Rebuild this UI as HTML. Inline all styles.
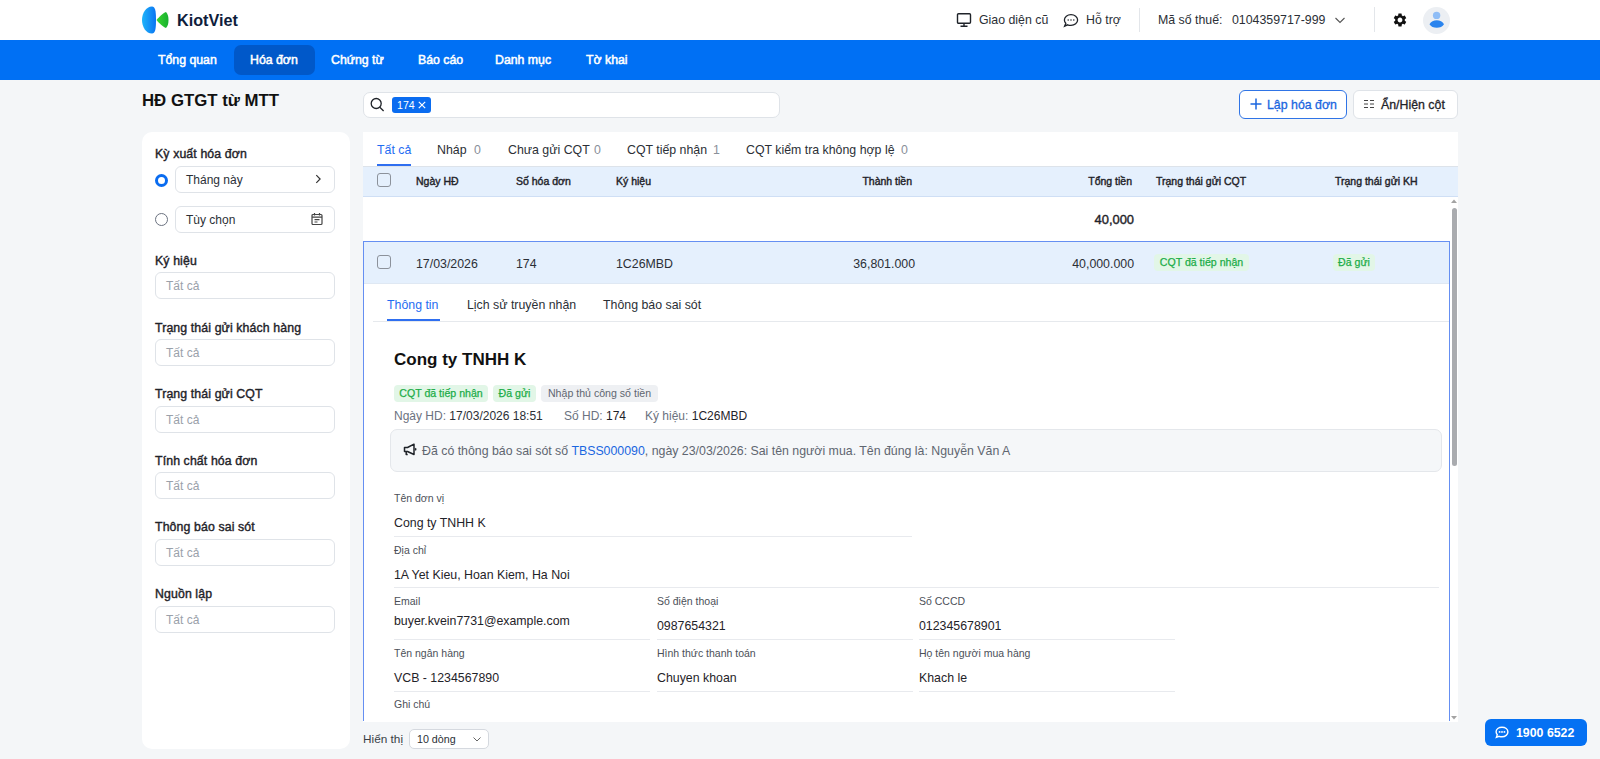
<!DOCTYPE html>
<html><head><meta charset="utf-8">
<style>
*{box-sizing:border-box;margin:0;padding:0}
html,body{width:1600px;height:759px;overflow:hidden;background:#f4f6f8;font-family:"Liberation Sans",sans-serif;color:#1f2329;position:relative}
.abs{position:absolute}
.t{position:absolute;white-space:nowrap;line-height:1}
/* header */
#hdr{position:absolute;left:0;top:0;width:1600px;height:40px;background:#fff}
#nav{position:absolute;left:0;top:40px;width:1600px;height:40px;background:#0070f4}
.navi{position:absolute;top:5px;height:30px;line-height:30px;color:#fff;font-weight:bold;font-size:12.35px;text-align:center;border-radius:7px}
.card{position:absolute;background:#fff;border-radius:10px}
.lbl{position:absolute;font-size:12.3px;font-weight:normal;-webkit-text-stroke:0.4px currentColor;letter-spacing:0.12px;color:#1f2329;white-space:nowrap;line-height:1}
.inp{position:absolute;border:1px solid #dfe3e8;border-radius:6px;background:#fff;height:26.5px}
.ph{position:absolute;left:10px;top:6px;font-size:12px;color:#9aa1aa;line-height:14px;white-space:nowrap}
.th{font-size:10.5px;font-weight:normal;color:#1f2329;-webkit-text-stroke:0.4px currentColor}
.td{font-size:12.35px;color:#2b2f36}
.badge{height:17px;line-height:17px;font-size:10.6px;-webkit-text-stroke:0.25px currentColor;text-align:center;border-radius:4px;white-space:nowrap}
.g{background:#e2f6e7;color:#1cad48}
.gr{background:#eef0f3;color:#5f6670;-webkit-text-stroke:0}
.fl{font-size:10.5px;color:#4b5058}
.fv{font-size:12.35px;color:#1f2329}
.navt{top:14px;font-size:12.3px;font-weight:normal;color:#fff;-webkit-text-stroke:0.5px #fff}
.med{-webkit-text-stroke:0.3px currentColor}
</style></head>
<body>
<div id="hdr">
  <!-- logo -->
  <svg class="abs" style="left:141px;top:5px" width="30" height="30" viewBox="0 0 30 30">
    <defs>
      <linearGradient id="gb" x1="0" y1="0" x2="1" y2="0"><stop offset="0" stop-color="#1fb4fa"/><stop offset="1" stop-color="#0a74f2"/></linearGradient>
      <linearGradient id="gg" x1="0" y1="0" x2="1" y2="0"><stop offset="0" stop-color="#3ad62e"/><stop offset="1" stop-color="#18b030"/></linearGradient>
    </defs>
    <path d="M11 1.5 C5 1.5 1 8 1 15 C1 22 5 28.5 11 28.5 C14 28.5 15 25 15 15 C15 5 14 1.5 11 1.5Z" fill="url(#gb)"/>
    <path d="M25 7 C22 8 18 12 15.5 15 C18 18 22 22 25 23 C27 21 27.5 18 27.5 15 C27.5 12 27 9 25 7Z" fill="url(#gg)"/>
  </svg>
  <div class="t" style="left:177px;top:12px;font-size:16.2px;font-weight:bold;color:#0e1d3c">KiotViet</div>
  <!-- monitor icon -->
  <svg class="abs" style="left:956px;top:12px" width="16" height="16" viewBox="0 0 16 16" fill="none" stroke="#1f2329" stroke-width="1.4">
    <rect x="1.5" y="1.8" width="13" height="9.5" rx="1"/>
    <path d="M8 11.5V14M4.5 14.3H11.5"/>
  </svg>
  <div class="t" style="left:979px;top:14px;font-size:12.35px;color:#2b2f36">Giao diện cũ</div>
  <svg class="abs" style="left:1063px;top:12px" width="16" height="16" viewBox="0 -0.6 16 16" fill="none" stroke="#1f2329" stroke-width="1.3">
    <path d="M8 2.1C4.3 2.1 1.4 4.4 1.4 7.4c0 1.3.5 2.4 1.4 3.3L1.6 13.6l3-1.4c1 .4 2.2.6 3.4.6 3.7 0 6.6-2.4 6.6-5.4S11.7 2.1 8 2.1z"/>
    <circle cx="5.2" cy="7.4" r=".75" fill="#1f2329" stroke="none"/><circle cx="8" cy="7.4" r=".75" fill="#1f2329" stroke="none"/><circle cx="10.8" cy="7.4" r=".75" fill="#1f2329" stroke="none"/>
  </svg>
  <div class="t" style="left:1086px;top:14px;font-size:12.35px;color:#2b2f36">Hỗ trợ</div>
  <div class="abs" style="left:1139px;top:8px;width:1px;height:24px;background:#e3e6ea"></div>
  <div class="t" style="left:1158px;top:14px;font-size:12.35px;color:#2b2f36">Mã số thuế:</div>
  <div class="t" style="left:1232px;top:14px;font-size:12.35px;color:#2b2f36">0104359717-999</div>
  <svg class="abs" style="left:1334px;top:14px" width="12" height="12" viewBox="0 0 12 12" fill="none" stroke="#555" stroke-width="1.1"><path d="M1.5 4l4.5 4.5L10.5 4"/></svg>
  <div class="abs" style="left:1374px;top:7px;width:1px;height:25px;background:#e3e6ea"></div>
  <!-- gear -->
  <svg class="abs" style="left:1392px;top:12px" width="16" height="16" viewBox="0 0 24 24">
    <path fill="#111" d="M19.14 12.94c.04-.3.06-.61.06-.94 0-.32-.02-.64-.07-.94l2.03-1.58a.49.49 0 0 0 .12-.61l-1.92-3.32a.488.488 0 0 0-.59-.22l-2.39.96c-.5-.38-1.03-.7-1.62-.94l-.36-2.54a.484.484 0 0 0-.48-.41h-3.84c-.24 0-.43.17-.47.41l-.36 2.54c-.59.24-1.13.57-1.62.94l-2.39-.96c-.22-.08-.47 0-.59.22L2.74 8.87c-.12.21-.08.47.12.61l2.03 1.58c-.05.3-.09.63-.09.94s.02.64.07.94l-2.03 1.58a.49.49 0 0 0-.12.61l1.92 3.32c.12.22.37.29.59.22l2.39-.96c.5.38 1.03.7 1.62.94l.36 2.54c.05.24.24.41.48.41h3.84c.24 0 .44-.17.47-.41l.36-2.54c.59-.24 1.13-.56 1.62-.94l2.39.96c.22.08.47 0 .59-.22l1.92-3.32c.12-.22.07-.47-.12-.61l-2.01-1.58zM12 15.6c-1.98 0-3.6-1.62-3.6-3.6s1.62-3.6 3.6-3.6 3.6 1.62 3.6 3.6-1.62 3.6-3.6 3.6z"/>
  </svg>
  <div class="abs" style="left:1423px;top:7px;width:27px;height:27px;border-radius:50%;background:#eceff3"></div>
  <svg class="abs" style="left:1423px;top:7px" width="27" height="27" viewBox="0 0 27 27">
    <circle cx="13.6" cy="8.4" r="3.7" fill="#8fbdf6"/>
    <path d="M6.5 17.2C9 12 18.5 12 21 17.2C18.5 22 9 22 6.5 17.2Z" fill="#2a84ee"/>
  </svg>
</div>

<div id="nav">
  <div class="abs" style="left:234px;top:5px;width:81px;height:30px;background:#0058c9;border-radius:7px"></div>
  <div class="t navt" style="left:158px">Tổng quan</div>
  <div class="t navt" style="left:250px">Hóa đơn</div>
  <div class="t navt" style="left:331px">Chứng từ</div>
  <div class="t navt" style="left:418px">Báo cáo</div>
  <div class="t navt" style="left:495px">Danh mục</div>
  <div class="t navt" style="left:586px">Tờ khai</div>
</div>
</div>

<div class="t" style="left:142px;top:93px;font-size:16.8px;font-weight:bold;color:#111">HĐ GTGT từ MTT</div>

<!-- search -->
<div class="abs" style="left:363px;top:91.5px;width:417px;height:26.5px;background:#fff;border:1px solid #dfe3e8;border-radius:7px"></div>
<svg class="abs" style="left:369px;top:97px" width="17" height="17" viewBox="0 0 17 17" fill="none" stroke="#1f2329" stroke-width="1.3"><circle cx="7.2" cy="6.5" r="5"/><path d="M10.8 10.2L14.6 14"/></svg>
<div class="abs" style="left:392px;top:97px;width:39px;height:16px;background:#0a6cf0;border-radius:3px"></div>
<div class="t" style="left:397px;top:100px;font-size:10.6px;color:#fff">174</div>
<svg class="abs" style="left:417px;top:100px" width="10" height="10" viewBox="0 0 10 10" stroke="#fff" stroke-width="1.2"><path d="M1.8 1.8l6.4 6.4M8.2 1.8L1.8 8.2"/></svg>

<!-- buttons -->
<div class="abs" style="left:1239px;top:90px;width:108px;height:29px;background:#fff;border:1px solid #2f74e6;border-radius:6px"></div>
<svg class="abs" style="left:1249px;top:97px" width="14" height="14" viewBox="0 0 14 14" stroke="#1a66e0" stroke-width="1.5"><path d="M7 1.5v11M1.5 7h11"/></svg>
<div class="t med" style="left:1267px;top:99px;font-size:12.35px;color:#1a66e0">Lập hóa đơn</div>
<div class="abs" style="left:1353px;top:90px;width:105px;height:29px;background:#fff;border:1px solid #dfe3e8;border-radius:6px"></div>
<svg class="abs" style="left:1363px;top:98px" width="12" height="12" viewBox="0 0 12 12" stroke="#444" stroke-width="1"><path d="M1 2.5h4M7 2.5h4M1 6h4M7 6h4M1 9.5h4M7 9.5h4"/></svg>
<div class="t med" style="left:1381px;top:99px;font-size:12.35px;color:#1f2329">Ẩn/Hiện cột</div>

<!-- sidebar -->
<div class="card" style="left:142px;top:132px;width:208px;height:617px"></div>
<div class="lbl" style="left:155px;top:148px">Kỳ xuất hóa đơn</div>
<div class="abs" style="left:155px;top:173.5px;width:13px;height:13px;border-radius:50%;border:3.6px solid #0a6cf0;background:#fff"></div>
<div class="inp" style="left:175px;top:166px;width:160px"><div class="ph" style="color:#2b2f36">Tháng này</div></div>
<svg class="abs" style="left:312px;top:173px" width="12" height="12" viewBox="0 0 12 12" fill="none" stroke="#333" stroke-width="1.2"><path d="M4.3 2.2L8.1 6 4.3 9.8"/></svg>
<div class="abs" style="left:155px;top:213px;width:13px;height:13px;border-radius:50%;border:1px solid #6b7280;background:#fff"></div>
<div class="inp" style="left:175px;top:206px;width:160px"><div class="ph" style="color:#2b2f36">Tùy chọn</div></div>
<svg class="abs" style="left:310px;top:212px" width="14" height="14" viewBox="0 0 14 14" fill="none" stroke="#444" stroke-width="1.2"><rect x="2" y="2.5" width="10" height="10" rx="1"/><path d="M2 5.2h10M4.5 1v2.5M9.5 1v2.5M4.5 7.7h5M4.5 10h3"/></svg>
<div class="lbl" style="left:155px;top:255px">Ký hiệu</div>
<div class="inp" style="left:155px;top:272px;width:180px"><div class="ph">Tất cả</div></div>
<div class="lbl" style="left:155px;top:322px">Trạng thái gửi khách hàng</div>
<div class="inp" style="left:155px;top:339px;width:180px"><div class="ph">Tất cả</div></div>
<div class="lbl" style="left:155px;top:388px">Trạng thái gửi CQT</div>
<div class="inp" style="left:155px;top:406px;width:180px"><div class="ph">Tất cả</div></div>
<div class="lbl" style="left:155px;top:455px">Tính chất hóa đơn</div>
<div class="inp" style="left:155px;top:472px;width:180px"><div class="ph">Tất cả</div></div>
<div class="lbl" style="left:155px;top:521px">Thông báo sai sót</div>
<div class="inp" style="left:155px;top:539px;width:180px"><div class="ph">Tất cả</div></div>
<div class="lbl" style="left:155px;top:588px">Nguồn lập</div>
<div class="inp" style="left:155px;top:606px;width:180px"><div class="ph">Tất cả</div></div>

<!-- main card -->
<div class="abs" style="left:363px;top:132px;width:1095px;height:590px;background:#fff;overflow:hidden"></div>
<!-- status tabs -->
<div class="t" style="left:377px;top:144px;font-size:12.35px;color:#1f6df2">Tất cả</div>
<div class="abs" style="left:377px;top:164px;width:34px;height:2px;background:#2f6ff0"></div>
<div class="t" style="left:437px;top:144px;font-size:12.35px;color:#2b2f36">Nháp</div>
<div class="t" style="left:474px;top:144px;font-size:12.35px;color:#8a9099">0</div>
<div class="t" style="left:508px;top:144px;font-size:12.35px;color:#2b2f36">Chưa gửi CQT</div>
<div class="t" style="left:594px;top:144px;font-size:12.35px;color:#8a9099">0</div>
<div class="t" style="left:627px;top:144px;font-size:12.35px;color:#2b2f36">CQT tiếp nhận</div>
<div class="t" style="left:713px;top:144px;font-size:12.35px;color:#8a9099">1</div>
<div class="t" style="left:746px;top:144px;font-size:12.35px;color:#2b2f36">CQT kiểm tra không hợp lệ</div>
<div class="t" style="left:901px;top:144px;font-size:12.35px;color:#8a9099">0</div>
<!-- header row -->
<div class="abs" style="left:363px;top:166px;width:1095px;height:31px;background:#e5f0fd;border-top:1px solid #dde3ea;border-bottom:1px solid #cfdff5"></div>
<div class="abs" style="left:377px;top:173px;width:14px;height:14px;border:1px solid #8c929b;border-radius:3px;background:transparent"></div>
<div class="t th" style="left:416px;top:176px">Ngày HĐ</div>
<div class="t th" style="left:516px;top:176px">Số hóa đơn</div>
<div class="t th" style="left:616px;top:176px">Ký hiệu</div>
<div class="t th" style="right:688px;top:176px">Thành tiền</div>
<div class="t th" style="right:468px;top:176px">Tổng tiền</div>
<div class="t th" style="left:1156px;top:176px">Trạng thái gửi CQT</div>
<div class="t th" style="left:1335px;top:176px">Trạng thái gửi KH</div>
<!-- summary row -->
<div class="t med" style="right:466px;top:214px;font-size:12.9px;color:#1f2329;-webkit-text-stroke:0.4px #1f2329">40,000</div>
<!-- data row -->
<div class="abs" style="left:363px;top:241px;width:1087px;height:480px;border:1px solid #658ff2;border-bottom:none"></div>
<div class="abs" style="left:364px;top:242px;width:1085px;height:42px;background:#e5f0fd;border-bottom:1px solid #dfe8f3"></div>
<div class="abs" style="left:377px;top:255px;width:14px;height:14px;border:1px solid #8c929b;border-radius:3px;background:transparent"></div>
<div class="t td" style="left:416px;top:258px">17/03/2026</div>
<div class="t td" style="left:516px;top:258px">174</div>
<div class="t td" style="left:616px;top:258px">1C26MBD</div>
<div class="t td" style="right:685px;top:258px">36,801.000</div>
<div class="t td" style="right:466px;top:258px">40,000.000</div>
<div class="abs badge g" style="left:1154px;top:254px;width:95px">CQT đã tiếp nhận</div>
<div class="abs badge g" style="left:1333px;top:254px;width:42px">Đã gửi</div>
<!-- detail -->
<div class="t" style="left:387px;top:299px;font-size:12.35px;color:#1f6df2">Thông tin</div>
<div class="abs" style="left:387px;top:319px;width:53px;height:2px;background:#2f6ff0"></div>
<div class="t" style="left:467px;top:299px;font-size:12.35px;color:#2b2f36">Lịch sử truyền nhận</div>
<div class="t" style="left:603px;top:299px;font-size:12.35px;color:#2b2f36">Thông báo sai sót</div>
<div class="abs" style="left:373px;top:321px;width:1076px;height:1px;background:#e6e9ed"></div>

<div class="t" style="left:394px;top:351px;font-size:17px;font-weight:bold;color:#111">Cong ty TNHH K</div>
<div class="abs badge g" style="left:394px;top:385px;width:94px">CQT đã tiếp nhận</div>
<div class="abs badge g" style="left:493px;top:385px;width:43px">Đã gửi</div>
<div class="abs badge gr" style="left:541px;top:385px;width:117px">Nhập thủ công số tiền</div>
<div class="t" style="left:394px;top:410px;font-size:12px;color:#6b7280">Ngày HD: <span style="color:#2b2f36">17/03/2026 18:51</span></div>
<div class="t" style="left:564px;top:410px;font-size:12px;color:#6b7280">Số HD: <span style="color:#1f2329">174</span></div>
<div class="t" style="left:645px;top:410px;font-size:12px;color:#6b7280">Ký hiệu: <span style="color:#1f2329">1C26MBD</span></div>

<div class="abs" style="left:390px;top:429px;width:1052px;height:43px;background:#f5f7f9;border:1px solid #e4e7eb;border-radius:7px"></div>
<svg class="abs" style="left:403px;top:443px" width="14" height="13" viewBox="0 0 14 13" fill="none" stroke="#1f2329" stroke-width="1.5" stroke-linejoin="round"><path d="M1.5 4.5h3L11 1.2v10.3L4.5 8.5h-3z"/><path d="M3.2 8.5v3h1.5"/><path d="M12.3 5.2q.8 1.1 0 2.2"/></svg>
<div class="t" style="left:422px;top:445px;font-size:12.35px;color:#5f6670">Đã có thông báo sai sót số <span style="color:#1a66e0">TBSS000090</span>, ngày 23/03/2026: Sai tên người mua. Tên đúng là: Nguyễn Văn A</div>
<div class="t fl" style="left:394px;top:493px">Tên đơn vị</div>
<div class="t fv" style="left:394px;top:517px">Cong ty TNHH K</div>
<div class="abs" style="left:394px;top:536px;width:518px;height:1px;background:#e8eaee"></div>
<div class="t fl" style="left:394px;top:545px">Địa chỉ</div>
<div class="t fv" style="left:394px;top:569px">1A Yet Kieu, Hoan Kiem, Ha Noi</div>
<div class="abs" style="left:394px;top:587px;width:1045px;height:1px;background:#e8eaee"></div>
<div class="t fl" style="left:394px;top:596px">Email</div>
<div class="t fv" style="left:394px;top:615px">buyer.kvein7731@example.com</div>
<div class="abs" style="left:394px;top:639px;width:256px;height:1px;background:#e8eaee"></div>
<div class="t fl" style="left:657px;top:596px">Số điện thoại</div>
<div class="t fv" style="left:657px;top:620px">0987654321</div>
<div class="abs" style="left:657px;top:639px;width:256px;height:1px;background:#e8eaee"></div>
<div class="t fl" style="left:919px;top:596px">Số CCCD</div>
<div class="t fv" style="left:919px;top:620px">012345678901</div>
<div class="abs" style="left:919px;top:639px;width:256px;height:1px;background:#e8eaee"></div>
<div class="t fl" style="left:394px;top:648px">Tên ngân hàng</div>
<div class="t fv" style="left:394px;top:672px">VCB - 1234567890</div>
<div class="abs" style="left:394px;top:691px;width:256px;height:1px;background:#e8eaee"></div>
<div class="t fl" style="left:657px;top:648px">Hình thức thanh toán</div>
<div class="t fv" style="left:657px;top:672px">Chuyen khoan</div>
<div class="abs" style="left:657px;top:691px;width:256px;height:1px;background:#e8eaee"></div>
<div class="t fl" style="left:919px;top:648px">Họ tên người mua hàng</div>
<div class="t fv" style="left:919px;top:672px">Khach le</div>
<div class="abs" style="left:919px;top:691px;width:256px;height:1px;background:#e8eaee"></div>
<div class="t fl" style="left:394px;top:699px">Ghi chú</div>
<!-- scrollbar -->
<div class="abs" style="left:1450px;top:197px;width:8px;height:525px;background:#fff"></div>
<svg class="abs" style="left:1450px;top:198px" width="8" height="6" viewBox="0 0 8 6"><path d="M1 5L4 1.5 7 5z" fill="#a3a3a3"/></svg>
<div class="abs" style="left:1452px;top:208px;width:5px;height:258px;background:#a9abaf;border-radius:2.5px"></div>
<svg class="abs" style="left:1450px;top:715px" width="8" height="6" viewBox="0 0 8 6"><path d="M1 1L4 4.5 7 1z" fill="#a3a3a3"/></svg>


<!-- footer -->
<div class="t" style="left:363px;top:734px;font-size:11.8px;color:#3a3f47">Hiển thị</div>
<div class="abs" style="left:409px;top:729px;width:80px;height:20px;background:#fff;border:1px solid #d5d9df;border-radius:5px"></div>
<div class="t" style="left:417px;top:734px;font-size:10.7px;color:#2b2f36">10 dòng</div>
<svg class="abs" style="left:472px;top:734px" width="10" height="10" viewBox="0 0 10 10" fill="none" stroke="#555" stroke-width="0.9"><path d="M1.5 3.5L5 7l3.5-3.5"/></svg>
<div class="abs" style="left:1485px;top:719px;width:102px;height:27px;background:#0571f3;border-radius:6px"></div>
<svg class="abs" style="left:1495px;top:726px" width="14" height="13" viewBox="0 0 14 13" fill="none" stroke="#fff" stroke-width="1.4"><path d="M7 1.2C3.7 1.2 1.1 3.2 1.1 5.8c0 1.1.5 2.1 1.2 2.9L1.4 11.4l2.7-1.1c.9.3 1.9.5 2.9.5 3.3 0 5.9-2.1 5.9-4.9S10.3 1.2 7 1.2z"/><circle cx="4.6" cy="5.9" r=".95" fill="#fff" stroke="none"/><circle cx="7" cy="5.9" r=".95" fill="#fff" stroke="none"/><circle cx="9.4" cy="5.9" r=".95" fill="#fff" stroke="none"/></svg>
<div class="t" style="left:1516px;top:727px;font-size:12.35px;font-weight:bold;color:#fff">1900 6522</div>
</body></html>
